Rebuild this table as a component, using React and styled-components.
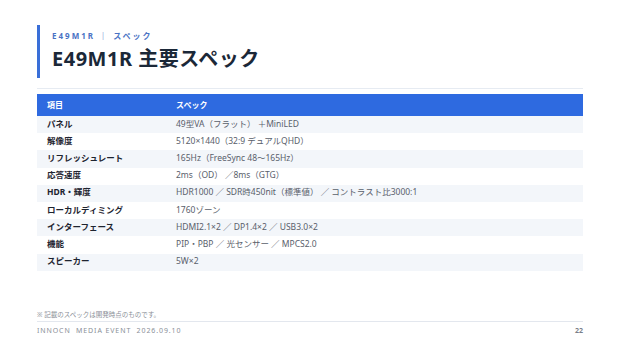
import React from "react";
import styled, { createGlobalStyle } from "styled-components";

const specs = [
  ["パネル", "49型VA（フラット） ＋MiniLED"],
  ["解像度", "5120×1440（32:9 デュアルQHD）"],
  ["リフレッシュレート", "165Hz（FreeSync 48〜165Hz）"],
  ["応答速度", "2ms（OD） ／8ms（GTG）"],
  ["HDR・輝度", "HDR1000 ／ SDR時450nit（標準値） ／ コントラスト比3000:1"],
  ["ローカルディミング", "1760ゾーン"],
  ["インターフェース", "HDMI2.1×2 ／ DP1.4×2 ／ USB3.0×2"],
  ["機能", "PIP・PBP ／ 光センサー ／ MPCS2.0"],
  ["スピーカー", "5W×2"],
];

export default function App() {
  return (
    <>
      <GlobalStyle />
      <Slide>
        <Header>
          <Label>E49M1R ｜ スペック</Label>
          <Title>E49M1R 主要スペック</Title>
        </Header>
        <Divider />
        <Table>
          <HeadRow>
            <HeadCell $first>項目</HeadCell>
            <HeadCell>スペック</HeadCell>
          </HeadRow>
          {specs.map((s, i) => (
            <Row key={s[0]} $striped={i % 2 === 0}>
              <NameCell>{s[0]}</NameCell>
              <ValueCell>{s[1]}</ValueCell>
            </Row>
          ))}
        </Table>
        <Footer>
          <Note>※ 記載のスペックは開発時点のものです。</Note>
          <FooterBar>
            <Event>INNOCN&nbsp;&nbsp;MEDIA EVENT&nbsp;&nbsp;2026.09.10</Event>
            <PageNo>22</PageNo>
          </FooterBar>
        </Footer>
      </Slide>
    </>
  );
}

const GlobalStyle = createGlobalStyle`
  body {
    margin: 0;
    background: #ffffff;
    font-family: "Noto Sans", "Noto Sans CJK JP", sans-serif;
  }
`;

const Slide = styled.div`
  width: 620px;
  height: 345px;
  box-sizing: border-box;
  padding: 25px 37px 0 37px;
  display: flex;
  flex-direction: column;
  background: #ffffff;
`;

const Header = styled.div`
  border-left: 3px solid #3a6fd8;
  padding-left: 12px;
  height: 53px;
  box-sizing: border-box;
  display: flex;
  flex-direction: column;
`;

const Label = styled.div`
  margin-top: 5px;
  font-size: 8px;
  line-height: 11px;
  font-weight: 700;
  letter-spacing: 2px;
  color: #4a72c4;
`;

const Title = styled.div`
  margin-top: 6px;
  font-size: 20px;
  line-height: 24px;
  font-weight: 700;
  letter-spacing: 0.5px;
  color: #1b2838;
`;

const Divider = styled.div`
  margin-top: 10px;
  height: 1px;
  background: #e6ebf2;
`;

const Table = styled.div`
  margin-top: 5px;
  display: flex;
  flex-direction: column;
`;

const HeadRow = styled.div`
  display: grid;
  grid-template-columns: 139px 1fr;
  height: 22px;
  align-items: center;
  background: #2e6ae0;
`;

const HeadCell = styled.div`
  padding-left: ${(p) => (p.$first ? "10px" : "0")};
  font-size: 8px;
  line-height: 12px;
  padding-bottom: 1px;
  font-weight: 700;
  color: #ffffff;
`;

const Row = styled.div`
  display: grid;
  grid-template-columns: 139px 1fr;
  height: 17.2px;
  align-items: center;
  background: ${(p) => (p.$striped ? "#f3f6fa" : "#ffffff")};
`;

const NameCell = styled.div`
  padding-left: 10px;
  font-size: 8.5px;
  line-height: 12px;
  padding-bottom: 2px;
  font-weight: 700;
  color: #1e2430;
  white-space: nowrap;
`;

const ValueCell = styled.div`
  font-size: 8.5px;
  line-height: 12px;
  padding-bottom: 2px;
  color: #59606b;
  white-space: nowrap;
`;

const Footer = styled.div`
  margin-top: auto;
  padding-bottom: 10px;
`;

const Note = styled.div`
  font-size: 6.5px;
  line-height: 9px;
  color: #8a8f98;
  padding-bottom: 2px;
  border-bottom: 1px solid #e3e7ee;
`;

const FooterBar = styled.div`
  display: flex;
  justify-content: space-between;
  align-items: center;
  margin-top: 4px;
`;

const Event = styled.div`
  font-size: 7px;
  letter-spacing: 0.9px;
  color: #8a8f98;
`;

const PageNo = styled.div`
  font-size: 7px;
  font-weight: 700;
  color: #7a7f88;
`;
